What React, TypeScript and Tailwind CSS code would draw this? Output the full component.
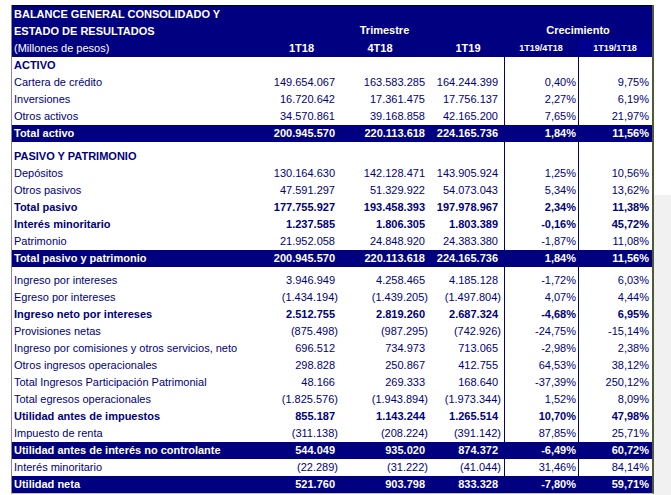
import React from 'react';

type Row = {
    label: string;
    vals?: string[];
    kind?: 'section' | 'bold' | 'bar' | 'normal';
};

const rows1: Row[] = [
    { label: 'ACTIVO', kind: 'section' },
    { label: 'Cartera de crédito', vals: ['149.654.067', '163.583.285', '164.244.399', '0,40%', '9,75%'] },
    { label: 'Inversiones', vals: ['16.720.642', '17.361.475', '17.756.137', '2,27%', '6,19%'] },
    { label: 'Otros activos', vals: ['34.570.861', '39.168.858', '42.165.200', '7,65%', '21,97%'] },
    { label: 'Total activo', kind: 'bar', vals: ['200.945.570', '220.113.618', '224.165.736', '1,84%', '11,56%'] },
];

const rows2: Row[] = [
    { label: 'PASIVO Y PATRIMONIO', kind: 'section' },
    { label: 'Depósitos', vals: ['130.164.630', '142.128.471', '143.905.924', '1,25%', '10,56%'] },
    { label: 'Otros pasivos', vals: ['47.591.297', '51.329.922', '54.073.043', '5,34%', '13,62%'] },
    { label: 'Total pasivo', kind: 'bold', vals: ['177.755.927', '193.458.393', '197.978.967', '2,34%', '11,38%'] },
    { label: 'Interés minoritario', kind: 'bold', vals: ['1.237.585', '1.806.305', '1.803.389', '-0,16%', '45,72%'] },
    { label: 'Patrimonio', vals: ['21.952.058', '24.848.920', '24.383.380', '-1,87%', '11,08%'] },
    { label: 'Total pasivo y patrimonio', kind: 'bar', vals: ['200.945.570', '220.113.618', '224.165.736', '1,84%', '11,56%'] },
];

const rows3: Row[] = [
    { label: 'Ingreso por intereses', vals: ['3.946.949', '4.258.465', '4.185.128', '-1,72%', '6,03%'] },
    { label: 'Egreso por intereses', vals: ['(1.434.194)', '(1.439.205)', '(1.497.804)', '4,07%', '4,44%'] },
    { label: 'Ingreso neto por intereses', kind: 'bold', vals: ['2.512.755', '2.819.260', '2.687.324', '-4,68%', '6,95%'] },
    { label: 'Provisiones netas', vals: ['(875.498)', '(987.295)', '(742.926)', '-24,75%', '-15,14%'] },
    { label: 'Ingreso por comisiones y otros servicios, neto', vals: ['696.512', '734.973', '713.065', '-2,98%', '2,38%'] },
    { label: 'Otros ingresos operacionales', vals: ['298.828', '250.867', '412.755', '64,53%', '38,12%'] },
    { label: 'Total Ingresos Participación Patrimonial', vals: ['48.166', '269.333', '168.640', '-37,39%', '250,12%'] },
    { label: 'Total egresos operacionales', vals: ['(1.825.576)', '(1.943.894)', '(1.973.344)', '1,52%', '8,09%'] },
    { label: 'Utilidad antes de impuestos', kind: 'bold', vals: ['855.187', '1.143.244', '1.265.514', '10,70%', '47,98%'] },
    { label: 'Impuesto de renta', vals: ['(311.138)', '(208.224)', '(391.142)', '87,85%', '25,71%'] },
    { label: 'Utilidad antes de interés no controlante', kind: 'bar', vals: ['544.049', '935.020', '874.372', '-6,49%', '60,72%'] },
    { label: 'Interés minoritario', vals: ['(22.289)', '(31.222)', '(41.044)', '31,46%', '84,14%'] },
    { label: 'Utilidad neta', kind: 'bar', vals: ['521.760', '903.798', '833.328', '-7,80%', '59,71%'] },
];

const grid = 'grid grid-cols-[253px_73px_90px_76px_74px_74px]';
const pads = ['pr-[3px]', 'pr-[3px]', 'pr-[6px]', 'pr-[2px]', 'pr-[3px]'];

const TableRow = ({ row }: { row: Row }) => {
    const bar = row.kind === 'bar';
    const bold = row.kind !== 'normal' && row.kind !== undefined;
    return (
        <div className={`${grid} h-[17px] items-center ${bar ? 'bg-[#000080] text-white' : 'text-[#000080]'} ${bold ? 'font-bold' : ''}`}>
            <div className="pl-[2px] whitespace-nowrap">{row.label}</div>
            {[0, 1, 2, 3, 4].map((i) => {
                const v = row.vals ? row.vals[i] : '';
                const neg = v.startsWith('(');
                return (
                    <div
                        key={i}
                        className={`h-full flex items-center justify-end whitespace-nowrap ${pads[i]} ${i >= 3 ? 'border-l border-[#000080]' : ''}`}
                    >
                        <span className={neg ? 'mr-[-3px]' : ''}>{v}</span>
                    </div>
                );
            })}
        </div>
    );
};

const Spacer = ({ h }: { h: string }) => (
    <div className={`${grid} ${h}`}>
        <div></div>
        <div></div>
        <div></div>
        <div></div>
        <div className="border-l border-[#000080]"></div>
        <div className="border-l border-[#000080]"></div>
    </div>
);

export default function App() {
    return (
        <div className="w-[671px] h-[495px] bg-white flex overflow-hidden font-['Liberation_Sans',Arial,sans-serif] text-[11px] leading-none">
            <div className="w-[11px]"></div>

            <div className="mt-[5px] border-l border-[#8a8a8a] border-r-2 border-r-[#4f5b35] border-b border-b-[#c4c4c4] self-start">
                {/* header */}
                <div className="bg-[#000080] text-white font-bold border-t border-black">
                    <div className={`${grid} h-[17px] items-center`}>
                        <div className="pl-[2px] whitespace-nowrap">BALANCE GENERAL CONSOLIDADO Y</div>
                    </div>
                    <div className={`${grid} h-[17px] items-center`}>
                        <div className="pl-[2px] whitespace-nowrap">ESTADO DE RESULTADOS</div>
                        <div className="col-span-3 text-center pb-[3px]">Trimestre</div>
                        <div className="col-span-2 text-center pb-[3px]">Crecimiento</div>
                    </div>
                    <div className={`${grid} h-[17px] items-center`}>
                        <div className="pl-[2px] font-normal whitespace-nowrap">(Millones de pesos)</div>
                        <div className="text-center">1T18</div>
                        <div className="text-center pr-[6px]">4T18</div>
                        <div className="text-center pl-[4px]">1T19</div>
                        <div className="text-center text-[9px]">1T19/4T18</div>
                        <div className="text-center text-[9px] h-full flex items-center justify-center bg-[#00008f]">1T19/1T18</div>
                    </div>
                </div>

                {rows1.map((r, i) => (
                    <TableRow key={'a' + i} row={r} />
                ))}
                <Spacer h="h-[6px]" />
                {rows2.map((r, i) => (
                    <TableRow key={'b' + i} row={r} />
                ))}
                <Spacer h="h-[5px]" />
                {rows3.map((r, i) => (
                    <TableRow key={'c' + i} row={r} />
                ))}
            </div>

            <div className="flex-1 flex flex-col">
                <div className="h-[195px]"></div>
                <div className="flex-1 bg-[#f1f1f1]"></div>
            </div>
        </div>
    );
}
